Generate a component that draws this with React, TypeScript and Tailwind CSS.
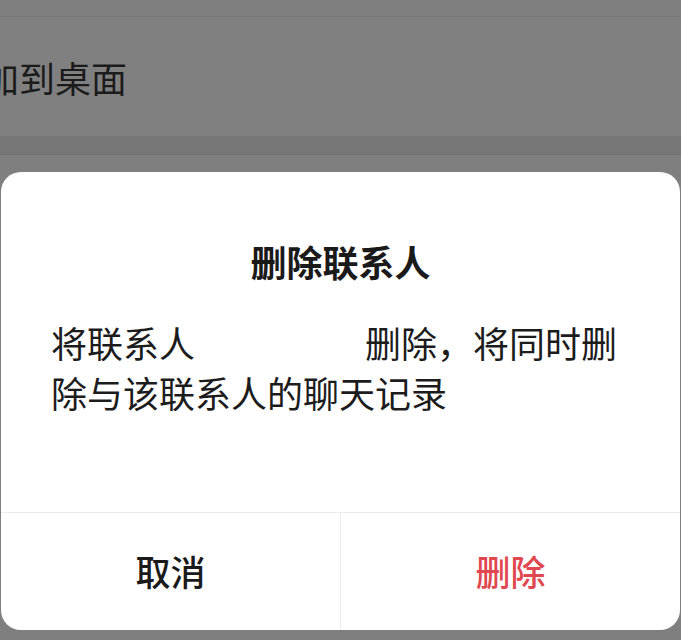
export default function App() {
  const font = { fontFamily: '"Noto Sans CJK SC", "Noto Sans", sans-serif' };

  return (
    <div className="w-[681px] h-[640px] overflow-hidden bg-[#7f7f7f] flex flex-col" style={font}>
      {/* 背后的设置列表（被遮罩压暗） */}
      <div className="h-[17px] border-b border-[#767676]" />
      <div className="h-[119px] bg-[#808080] flex items-center">
        <span className="-ml-[17px] text-[36px] leading-none text-[#1b1b1b]">加到桌面</span>
      </div>
      <div className="h-[19px] bg-[#777777] border-b border-[#727272]" />
      <div className="h-[17px]" />

      {/* 对话框 */}
      <div className="mx-px h-[458px] bg-white rounded-[20px] flex flex-col overflow-hidden">
        <div className="pt-[64px] text-center text-[36px] leading-[50px] font-bold text-[#1a1a1a]">
          删除联系人
        </div>
        <p className="mt-[31px] px-[50px] text-[36px] leading-[50px] text-[#1c1c1c]">
          将联系人<span className="inline-block w-[170px]" />删除，将同时删除与该联系人的聊天记录
        </p>
        <div className="mt-auto h-[118px] border-t border-[#ececec] flex">
          <button className="flex-1 flex items-center justify-center text-[35px] font-medium text-[#1a1a1a]">
            取消
          </button>
          <div className="w-px bg-[#ececec]" />
          <button className="flex-1 flex items-center justify-center text-[35px] font-medium text-[#e0474f]">
            删除
          </button>
        </div>
      </div>
    </div>
  );
}
